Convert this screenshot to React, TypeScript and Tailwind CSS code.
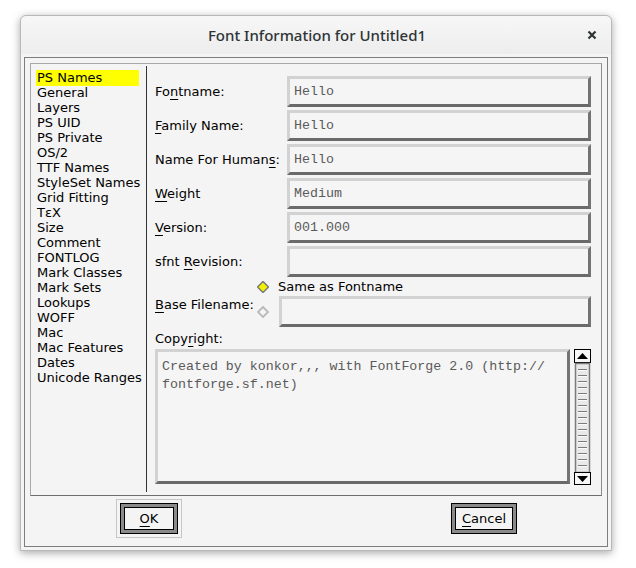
import React from "react";

const panes = [
  "PS Names",
  "General",
  "Layers",
  "PS UID",
  "PS Private",
  "OS/2",
  "TTF Names",
  "StyleSet Names",
  "Grid Fitting",
  "TεX",
  "Size",
  "Comment",
  "FONTLOG",
  "Mark Classes",
  "Mark Sets",
  "Lookups",
  "WOFF",
  "Mac",
  "Mac Features",
  "Dates",
  "Unicode Ranges",
];

// label text with one underlined mnemonic letter
function Mn({ pre, key_, post }: { pre: string; key_: string; post: string }) {
  return (
    <span>
      {pre}
      <span className="underline decoration-1 underline-offset-[3px]">{key_}</span>
      {post}
    </span>
  );
}

function Field({ value }: { value?: string }) {
  return (
    <div className="flex-1 h-[31px] border-[3px] border-t-[#d2d2d2] border-l-[#d2d2d2] border-r-[#737373] border-b-[#6a6a6a] bg-[#f5f5f5] flex items-center pl-[4px] font-['Liberation_Mono',monospace] text-[13.3px] text-[#5a5a5a]">
      {value}
    </div>
  );
}

function Row({ label, value }: { label: React.ReactNode; value?: string }) {
  return (
    <div className="flex items-center h-[31px] mb-[3px] pr-[10px]">
      <div className="w-[132px] pt-[1px]">{label}</div>
      <Field value={value} />
    </div>
  );
}

function Diamond({ on }: { on?: boolean }) {
  return (
    <svg width="12" height="12" viewBox="0 0 12 12">
      {on ? (
        <polygon points="6,0.5 11.5,6 6,11.5 0.5,6" fill="#f2f200" stroke="#7a7a7a" strokeWidth="1.5" />
      ) : (
        <polygon points="6,1 11,6 6,11 1,6" fill="#f5f5f5" stroke="#b9b9b9" strokeWidth="1.8" />
      )}
    </svg>
  );
}

function ScrollBar() {
  const grips = [];
  for (let y = 20; y < 120; y += 6) grips.push(y);
  return (
    <svg width="17" height="136" viewBox="0 0 17 136" className="shrink-0">
      {/* up arrow */}
      <rect x="0.5" y="0.5" width="16" height="13" fill="#f7f7f7" stroke="#000" />
      <polygon points="8.5,4 14,10 3,10" fill="#000" />
      {/* thumb */}
      <rect x="1.5" y="14.5" width="14" height="109" fill="#e9e9e9" stroke="#7c7c7c" strokeWidth="1.5" />
      {grips.map((y) => (
        <g key={y}>
          <line x1="4" x2="13" y1={y + 0.5} y2={y + 0.5} stroke="#7a7a7a" />
          <line x1="4" x2="13" y1={y + 1.5} y2={y + 1.5} stroke="#fbfbfb" />
        </g>
      ))}
      {/* down arrow */}
      <rect x="0.5" y="123.5" width="16" height="12" fill="#f7f7f7" stroke="#000" />
      <polygon points="3,127 14,127 8.5,133" fill="#000" />
    </svg>
  );
}

function GButton({ children, w }: { children: React.ReactNode; w: string }) {
  return (
    <div className={`${w} h-[31px] border border-black bg-[#8a8a8a] p-[3px]`}>
      <div className="w-full h-full border border-black bg-[#f4f4f4] flex items-center justify-center">
        {children}
      </div>
    </div>
  );
}

export default function App() {
  return (
    <div className="w-[636px] h-[568px] bg-white font-['DejaVu_Sans',sans-serif] text-[13px] text-black pt-[15px] pl-[20px]">
      <div className="w-[592px] h-[536px] border border-[#b8b8b8] rounded-t-[6px] bg-[#f4f4f4] shadow-[0_2px_9px_rgba(0,0,0,0.35)] flex flex-col">
        {/* title bar */}
        <div className="h-[38px] rounded-t-[6px] bg-gradient-to-b from-[#f7f7f7] to-[#ededed] flex items-center relative shrink-0">
          <div className="flex-1 text-center font-['Noto_Sans',sans-serif] font-medium text-[15px] text-[#2e3436] pt-[1px] pl-[2px]">
            Font Information for Untitled1
          </div>
          <svg width="10" height="10" viewBox="0 0 10 10" className="absolute right-[14px] top-[14px]">
            <path d="M1.5 1.5 L8.5 8.5 M8.5 1.5 L1.5 8.5" stroke="#2e3436" strokeWidth="2.2" />
          </svg>
        </div>

        {/* content */}
        <div className="flex-1 p-[3px]">
          <div className="h-[490px] border border-[#7d7d7d] flex flex-col">
            <div className="h-[433px] mt-[5px] mx-[5px] border border-t-[#a8a8a8] border-l-[#a8a8a8] border-r-[#8c8c8c] border-b-[#6e6e6e] flex">
              {/* pane list */}
              <div className="w-[115px] pl-[5px] pt-[6px] shrink-0">
                {panes.map((p, i) => (
                  <div
                    key={p}
                    className={`h-[15px] leading-[15px] pl-[1px] whitespace-nowrap ${i === 0 ? "bg-[#ffff00] w-[103px] h-[16px] leading-[16px] mb-[-1px]" : ""}`}
                  >
                    {p}
                  </div>
                ))}
              </div>
              <div className="w-[1px] bg-[#333] my-[2px] mb-[3px]" />

              {/* right pane */}
              <div className="flex-1 pl-[8px] pt-[12px] flex flex-col">
                <Row label={<Mn pre="Fo" key_="n" post="tname:" />} value="Hello" />
                <Row label={<Mn pre="" key_="F" post="amily Name:" />} value="Hello" />
                <Row label={<Mn pre="Name For Human" key_="s" post=":" />} value="Hello" />
                <Row label={<Mn pre="" key_="W" post="eight" />} value="Medium" />
                <Row label={<Mn pre="" key_="V" post="ersion:" />} value="001.000" />
                <Row label={<Mn pre="sfnt " key_="R" post="evision:" />} />

                {/* base filename */}
                <div className="flex pr-[10px] -mt-[2px]">
                  <div className="w-[102px] pt-[17px] whitespace-nowrap">
                    <Mn pre="" key_="B" post="ase Filename:" />
                  </div>
                  <div className="w-[12px] flex flex-col items-center">
                    <div className="mt-[3px]">
                      <Diamond on />
                    </div>
                    <div className="mt-[13px]">
                      <Diamond />
                    </div>
                  </div>
                  <div className="flex-1 ml-[10px] flex flex-col">
                    <div className="h-[17px] leading-[17px] -ml-[1px]">Same as Fontname</div>
                    <div className="flex mt-[1px]">
                      <Field />
                    </div>
                  </div>
                </div>

                {/* copyright */}
                <div className="h-[16px] leading-[16px] mt-[4px]">
                  <Mn pre="Copy" key_="r" post="ight:" />
                </div>
                <div className="flex mt-[2px] pr-[10px] gap-[4px]">
                  <div className="flex-1 h-[135px] border-[3px] border-t-[#d2d2d2] border-l-[#d2d2d2] border-r-[#737373] border-b-[#6a6a6a] bg-[#f5f5f5] px-[4px] pt-[6px] font-['Liberation_Mono',monospace] text-[13.3px] leading-[18px] text-[#5a5a5a]">
                    Created by konkor,,, with FontForge 2.0 (http://
                    <br />
                    fontforge.sf.net)
                  </div>
                  <ScrollBar />
                </div>
              </div>
            </div>

            {/* buttons */}
            <div className="flex-1 flex items-start pt-[3px] pl-[91px] pr-[90px]">
              <div className="border border-[#c6c6c6] p-[3px]">
                <GButton w="w-[58px]">
                  <Mn pre="" key_="O" post="K" />
                </GButton>
              </div>
              <div className="ml-auto mt-[4px]">
                <GButton w="w-[66px]">
                  <Mn pre="" key_="C" post="ancel" />
                </GButton>
              </div>
            </div>
          </div>
        </div>
      </div>
    </div>
  );
}
